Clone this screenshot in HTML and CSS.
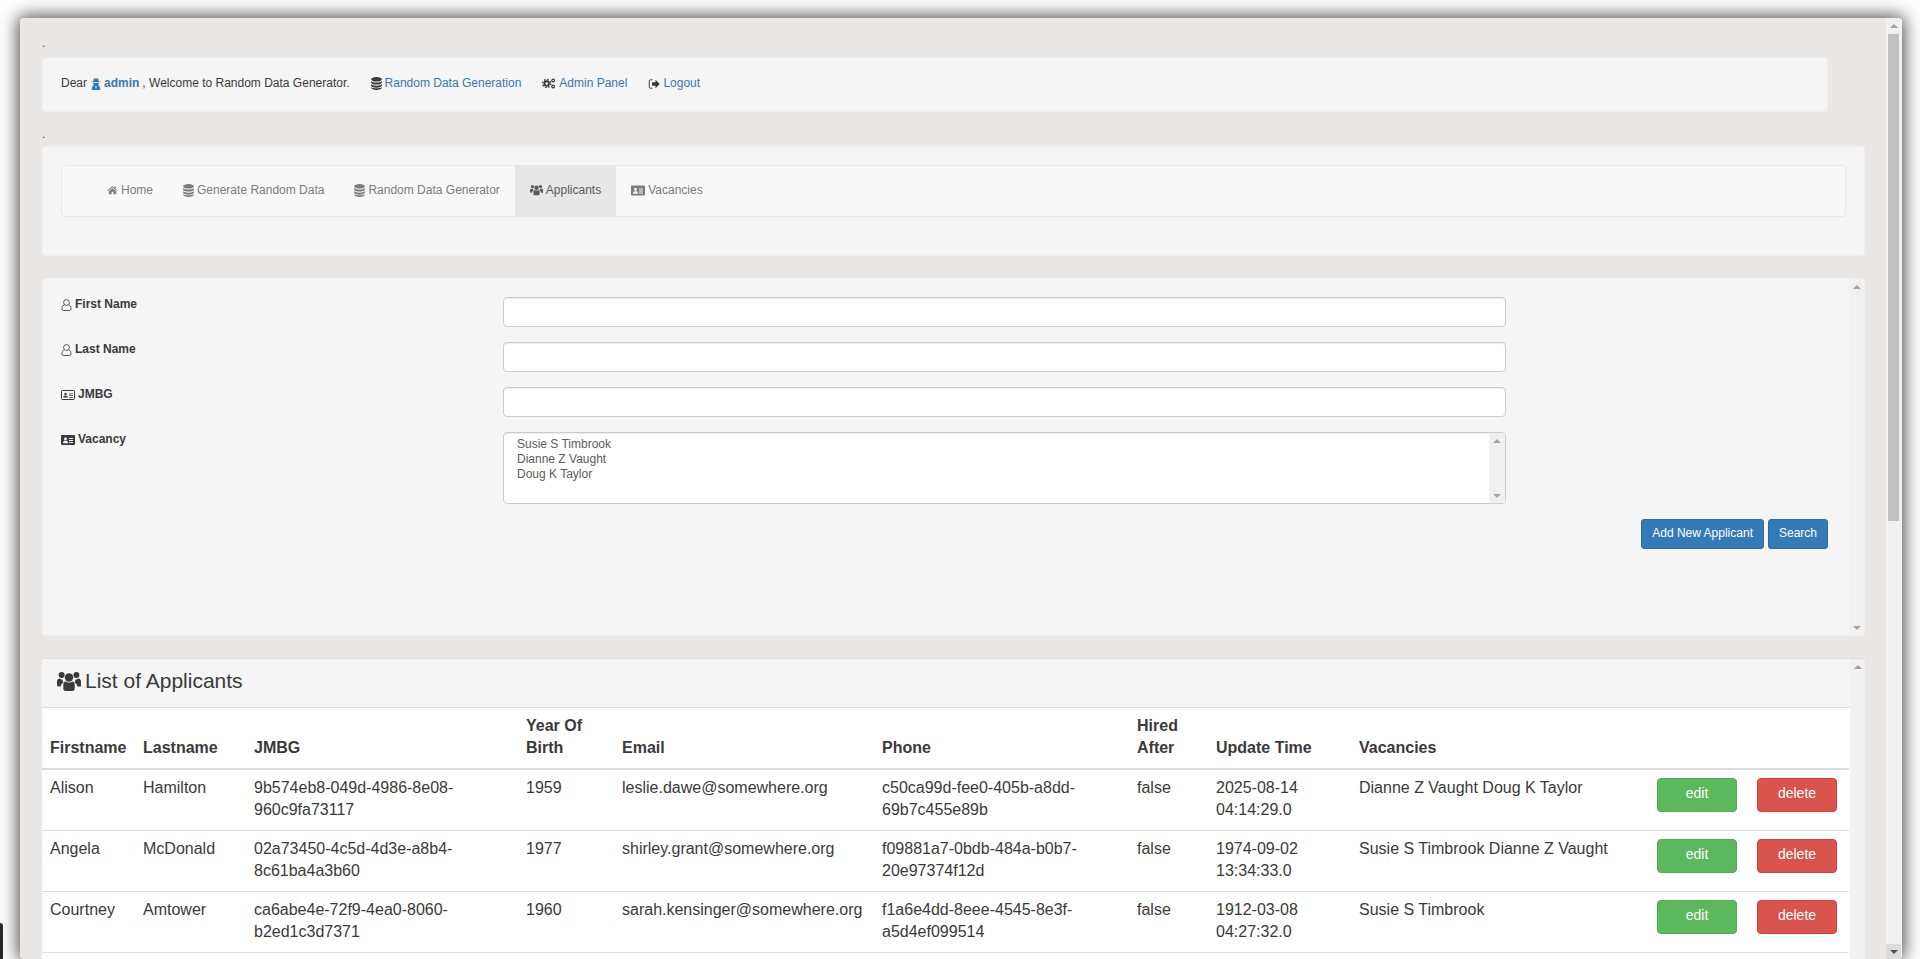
FILE: index.html
```html
<!DOCTYPE html>
<html lang="en">
<head>
<meta charset="utf-8">
<title>Applicants</title>
<link rel="stylesheet" href="styles.css">
</head>
<body>
<svg class="defs" aria-hidden="true">
  <symbol id="i-users" viewBox="0 0 24 20"><circle cx="12" cy="6" r="4.2"/><circle cx="4.6" cy="3.6" r="3"/><circle cx="19.4" cy="3.6" r="3"/><path d="M6.3 13.5q0-3.6 2.6-3.6 1.2 1.2 3.1 1.2t3.1-1.2q2.6 0 2.6 3.6v3.7q0 2.3-2.3 2.3H8.600q-2.300 0-2.300-2.300z"/><path d="M0 10.500q0-3.500 2.600-3.500 1 1 2.300 1 .3 0 .6-.1-.1 1.700 1.100 3.100-2.800 1-3 4H1.500Q0 15 0 13.500z"/><path d="M24 10.500q0-3.500-2.600-3.500-1 1-2.300 1-.3 0-.6-.1.100 1.700-1.100 3.100 2.800 1 3 4h3.100q1.500 0 1.500-1.500z"/></symbol>
  <symbol id="i-db" viewBox="0 0 20 24"><ellipse cx="10" cy="4.300" rx="10" ry="4.100"/><path d="M0 7.300c1.700 2 5.500 2.900 10 2.900s8.300-.9 10-2.900V10c0 2.200-4.500 4-10 4S0 12.200 0 10z"/><path d="M0 13.300c1.700 2 5.500 2.900 10 2.900s8.300-.9 10-2.900V16c0 2.200-4.500 4-10 4S0 18.200 0 16z" transform="translate(0 -.2)"/><path d="M0 18.300c1.700 2 5.500 2.400 10 2.400s8.300-.4 10-2.400V20c0 2.200-4.500 4-10 4S0 22.200 0 20z"/></symbol>
  <symbol id="i-home" viewBox="0 0 24 20"><path d="M12 1.500L.8 10.800l1.300 1.500L12 4.200l9.900 8.100 1.300-1.500-4.200-3.500V2.500h-3v2.800z"/><path d="M4 12.600l8-6.500 8 6.500V19h-6v-5h-4v5H4z"/></symbol>
  <symbol id="i-cogs" viewBox="0 0 30 24"><g fill="none" stroke="currentColor"><circle cx="10" cy="12" r="5" stroke-width="4"/><circle cx="10" cy="12" r="8.800" stroke-width="3" stroke-dasharray="3.500 3.400"/><circle cx="24" cy="5.500" r="3" stroke-width="2.600"/><circle cx="24" cy="18.500" r="3" stroke-width="2.600"/></g></symbol>
  <symbol id="i-out" viewBox="0 0 24 24"><path d="M9 3.500H5.500a3 3 0 0 0-3 3v11a3 3 0 0 0 3 3H9" fill="none" stroke="currentColor" stroke-width="2"/><path d="M8 8.500h7V3.500l8.500 8.500-8.500 8.500v-5H8z"/></symbol>
  <symbol id="i-secret" viewBox="0 0 20 24"><path d="M6 .5l4 1 4-1 2 6.500h3v1.500H1V7h3z"/><path d="M4.500 10h11v2.500q0 2-1.500 3 4.500 .5 4.500 4.500v4h-17v-4q0-4 4.500-4.500-1.500-1-1.500-3z"/><path d="M8 17h4l-2 4z" fill="#f5f5f5"/></symbol>
  <symbol id="i-user-o" viewBox="0 0 20 24"><g fill="none" stroke="currentColor" stroke-width="1.700"><circle cx="10" cy="7" r="5.800"/><path d="M5.300 11.800C2.500 12.800 1 15.500 1 19.500q0 3.500 3 3.500h12q3 0 3-3.500c0-4-1.500-6.700-4.300-7.700"/></g></symbol>
  <symbol id="i-card-o" viewBox="0 0 28 20"><rect x="1" y="1" width="26" height="18" rx="1.500" fill="none" stroke="currentColor" stroke-width="2"/><circle cx="9" cy="8" r="2.500"/><path d="M4.500 15q0-3.500 2-3.500h5q2 0 2 3.500z"/><path d="M16 7h8v1.500h-8zM16 10.500h8V12h-8zM16 14h8v1.500h-8z"/></symbol>
  <symbol id="i-card" viewBox="0 0 28 20"><path fill-rule="evenodd" d="M2 0h24q2 0 2 2v16q0 2-2 2H2q-2 0-2-2V2q0-2 2-2zM9 4.500a3 3 0 1 0 0 6 3 3 0 0 0 0-6zM4 16.500h10q0-5-2.500-5h-5Q4 11.500 4 16.500zM16 6v2h8V6zM16 10v2h8v-2zM16 14v2h8v-2z"/></symbol>
</svg>

<div class="tag"></div>

<div class="window">
  <main class="content">
    <p class="dot dot-first">.</p>
    <section class="well well-user">
      <span>Dear</span>
      <svg class="ic ic-secret link"><use href="#i-secret"/></svg>
      <a class="admin" href="#">admin</a>
      <span>, Welcome to Random Data Generator.</span>
      <span class="tool"><svg class="ic ic-db"><use href="#i-db"/></svg><a href="#">Random Data Generation</a></span>
      <span class="tool"><svg class="ic ic-cogs"><use href="#i-cogs"/></svg><a href="#">Admin Panel</a></span>
      <span class="tool"><svg class="ic ic-out"><use href="#i-out"/></svg><a href="#">Logout</a></span>
    </section>

    <p class="dot dot-second">.</p>
    <section class="well well-nav">
      <nav class="navbar">
        <a class="nav-link" href="#"><svg class="ic ic-home"><use href="#i-home"/></svg>Home</a>
        <a class="nav-link" href="#"><svg class="ic ic-db"><use href="#i-db"/></svg>Generate Random Data</a>
        <a class="nav-link" href="#"><svg class="ic ic-db"><use href="#i-db"/></svg>Random Data Generator</a>
        <a class="nav-link active" href="#"><svg class="ic ic-users"><use href="#i-users"/></svg>Applicants</a>
        <a class="nav-link" href="#"><svg class="ic ic-card"><use href="#i-card"/></svg>Vacancies</a>
      </nav>
    </section>

    <section class="well well-form">
      <form class="form">
        <div class="row">
          <label class="field-label"><svg class="ic ic-user"><use href="#i-user-o"/></svg>First Name</label>
          <input class="input" type="text">
        </div>
        <div class="row">
          <label class="field-label"><svg class="ic ic-user"><use href="#i-user-o"/></svg>Last Name</label>
          <input class="input" type="text">
        </div>
        <div class="row">
          <label class="field-label"><svg class="ic ic-card wide"><use href="#i-card-o"/></svg>JMBG</label>
          <input class="input" type="text">
        </div>
        <div class="row">
          <label class="field-label"><svg class="ic ic-card wide"><use href="#i-card"/></svg>Vacancy</label>
          <div class="listbox">
            <ul class="options">
              <li>Susie S Timbrook</li>
              <li>Dianne Z Vaught</li>
              <li>Doug K Taylor</li>
            </ul>
            <div class="vbar vbar-list"><i class="up"></i><i class="down"></i></div>
          </div>
        </div>
        <div class="actions">
          <button class="btn-sm" type="button">Add New Applicant</button>
          <button class="btn-sm" type="button">Search</button>
        </div>
      </form>
      <div class="vbar vbar-panel"><i class="up"></i><i class="down"></i></div>
    </section>

    <section class="well well-list">
      <div class="list-main">
        <h2 class="list-title"><svg class="ic ic-title"><use href="#i-users"/></svg>List of Applicants</h2>
        <table class="table">
          <colgroup>
            <col class="c1"><col class="c2"><col class="c3"><col class="c4"><col class="c5"><col class="c6"><col class="c7"><col class="c8"><col class="c9"><col class="c10"><col class="c10">
          </colgroup>
          <thead>
            <tr><th>Firstname</th><th>Lastname</th><th>JMBG</th><th>Year Of Birth</th><th>Email</th><th>Phone</th><th>Hired After</th><th>Update Time</th><th>Vacancies</th><th></th><th></th></tr>
          </thead>
          <tbody>
            <tr><td>Alison</td><td>Hamilton</td><td>9b574eb8-049d-4986-8e08-960c9fa73117</td><td>1959</td><td>leslie.dawe@somewhere.org</td><td>c50ca99d-fee0-405b-a8dd-69b7c455e89b</td><td>false</td><td>2025-08-14 04:14:29.0</td><td>Dianne Z Vaught Doug K Taylor</td><td><button class="btn edit" type="button">edit</button></td><td><button class="btn del" type="button">delete</button></td></tr>
            <tr><td>Angela</td><td>McDonald</td><td>02a73450-4c5d-4d3e-a8b4-8c61ba4a3b60</td><td>1977</td><td>shirley.grant@somewhere.org</td><td>f09881a7-0bdb-484a-b0b7-20e97374f12d</td><td>false</td><td>1974-09-02 13:34:33.0</td><td>Susie S Timbrook Dianne Z Vaught</td><td><button class="btn edit" type="button">edit</button></td><td><button class="btn del" type="button">delete</button></td></tr>
            <tr><td>Courtney</td><td>Amtower</td><td>ca6abe4e-72f9-4ea0-8060-b2ed1c3d7371</td><td>1960</td><td>sarah.kensinger@somewhere.org</td><td>f1a6e4dd-8eee-4545-8e3f-a5d4ef099514</td><td>false</td><td>1912-03-08 04:27:32.0</td><td>Susie S Timbrook</td><td><button class="btn edit" type="button">edit</button></td><td><button class="btn del" type="button">delete</button></td></tr>
          </tbody>
        </table>
      </div>
      <div class="vbar vbar-panel"><i class="up"></i></div>
    </section>
  </main>
  <aside class="vbar vbar-window">
    <div class="btn-up"><i class="up"></i></div>
    <div class="thumb"></div>
    <div class="btn-down"><i class="down"></i></div>
  </aside>
</div>
</body>
</html>
```

FILE: styles.css
```css
* { box-sizing: border-box; }
html, body { margin: 0; height: 959px; overflow: hidden; }
body {
  padding: 18px 18px 0 20px;
  background: #fff;
  color: #3a3a3a;
  font: 12px/17px "Liberation Sans", Arial, sans-serif;
}
.defs { display: none; }
a { color: #337ab7; text-decoration: none; }

.tag {
  position: absolute;
  left: 0;
  top: 923px;
  width: 3px;
  height: 36px;
  background: #23282b;
  border-radius: 0 4px 0 0;
}

.window {
  display: flex;
  height: 941px;
  background: #e9e8e6;
  border-radius: 4px;
  overflow: hidden;
  box-shadow: 0 0 18px 2px rgba(0,0,0,.72);
}
.content {
  flex: 1;
  min-width: 0;
  display: flex;
  flex-direction: column;
  padding: 17px 21px 0 22px;
}
.dot { margin: 0; height: 17px; font-size: 12px; line-height: 17px; }
.dot-first { margin-bottom: 5px; }
.dot-second { margin: 14px 0 3px; }

.well {
  background: #f5f5f5;
  border: 1px solid #f0f0f0;
  border-radius: 4px;
}
.well-user {
  margin-right: 37px;
  height: 55px;
  padding: 0 18px 2px;
  display: flex;
  align-items: center;
}
.well-user > span:first-child { margin-right: 4px; }
.admin { font-weight: 700; margin: 0 3px 0 3px; }
.tool { display: inline-flex; align-items: center; margin-left: 21px; }
.ic { flex: none; fill: currentColor; color: inherit; }
.link { color: #337ab7; }
.ic-secret { width: 10px; height: 12px; }
.ic-db { width: 11px; height: 13px; margin-right: 3px; }
.ic-cogs { width: 14px; height: 11px; margin-right: 3px; }
.ic-out { width: 12px; height: 12px; margin-right: 3px; }
.ic-home { width: 11px; height: 10px; margin-right: 3px; }
.ic-users { width: 13px; height: 12px; margin-right: 3px; }
.ic-card { width: 14px; height: 11px; margin-right: 3px; }
.ic-user { width: 11px; height: 12px; margin-right: 3px; }
.ic-card.wide { width: 14px; height: 10px; margin-right: 3px; }
.ic-title { width: 24px; height: 21px; margin-right: 4px; }

.well-nav {
  margin-bottom: 22px;
  padding: 18px 18px;
  height: 110px;
}
.navbar {
  display: flex;
  height: 52px;
  padding-left: 30px;
  background: #f8f8f8;
  border: 1px solid #e7e7e7;
  border-radius: 4px;
}
.nav-link {
  display: flex;
  align-items: center;
  padding: 0 15px 2px;
  color: #7c7c7c;
}
.nav-link.active { background: #e7e7e7; color: #5a5a5a; }

.well-form {
  display: flex;
  height: 358px;
  margin-bottom: 22px;
  padding: 0;
}
.form { flex: 1; padding: 15px 0 0 18px; }
.row { display: flex; width: 1445px; margin-bottom: 12px; }
.field-label {
  width: 442px;
  display: flex;
  align-items: center;
  height: 17px;
  margin-top: 2px;
  font-weight: 700;
}
.input, .listbox {
  margin-top: 3px;
  width: 1003px;
  background: #fff;
  border: 1px solid #ccc;
  border-radius: 4px;
  box-shadow: inset 0 1px 1px rgba(0,0,0,.075);
}
.input { height: 30px; padding: 5px 10px; font: inherit; }
.listbox { height: 72px; display: flex; overflow: hidden; }
.options { flex: 1; list-style: none; margin: 4px 0 0; padding: 0 0 0 13px; color: #5c5c5c; line-height: 15px; }
.vbar { flex: none; display: flex; flex-direction: column; justify-content: space-between; background: #f1f1f1; }
.vbar-list { width: 16px; padding: 6px 0 5px; background: #f0f0f0; }
.vbar-panel { width: 15px; padding: 6px 0 5px; }
.up, .down { display: block; width: 0; height: 0; margin: 0 auto; border-left: 4px solid transparent; border-right: 4px solid transparent; }
.up { border-bottom: 4px solid #a3a3a3; }
.down { border-top: 4px solid #a3a3a3; }
.actions { width: 1767px; margin-top: 15px; display: flex; justify-content: flex-end; gap: 4px; }
.btn-sm {
  height: 30px;
  padding: 0 10px 2px;
  font: 12px/17px "Liberation Sans", Arial, sans-serif;
  color: #fff;
  background: #337ab7;
  border: 1px solid #2e6da4;
  border-radius: 3px;
}

.well-list {
  flex: 1;
  min-height: 0;
  display: flex;
  overflow: hidden;
  border: 0;
  border-top: 1px solid #ddd;
  border-radius: 4px 4px 0 0;
}
.list-main { flex: 1; background: #fff; }
.list-title {
  display: flex;
  align-items: center;
  height: 49px;
  margin: 0;
  padding: 0 15px 4px;
  background: #f5f5f5;
  border-bottom: 1px solid #ddd;
  font-size: 21px;
  font-weight: 400;
  line-height: 22px;
}
.table {
  table-layout: fixed;
  border-collapse: collapse;
  width: 1807px;
  font-size: 16px;
  line-height: 22px;
}
.c1 { width: 93px; } .c2 { width: 111px; } .c3 { width: 272px; } .c4 { width: 96px; }
.c5 { width: 260px; } .c6 { width: 255px; } .c7 { width: 79px; } .c8 { width: 143px; }
.c9 { width: 298px; } .c10 { width: 100px; }
th, td { padding: 7px 8px 9px; text-align: left; vertical-align: top; }
th { vertical-align: bottom; border-bottom: 2px solid #ddd; }
td { border-bottom: 1px solid #ddd; }
.btn {
  display: block;
  width: 80px;
  height: 34px;
  margin-top: 1px;
  padding: 0 0 4px;
  font: 14px/20px "Liberation Sans", Arial, sans-serif;
  color: #fff;
  border: 1px solid;
  border-radius: 4px;
}
.edit { background: #5cb85c; border-color: #4cae4c; }
.del { background: #d9534f; border-color: #d43f3a; }

.vbar-window { width: 16px; position: relative; justify-content: flex-start; border-right: 1px solid #f5f5f5; }
.btn-up { height: 16px; padding-top: 6px; }
.thumb { width: 11px; height: 487px; margin-left: 2px; background: #c1c1c1; }
.btn-down {
  margin-top: auto;
  height: 15px;
  padding-top: 6px;
  background: #dcdcdc;
}
.btn-down .down { border-top-color: #505050; }
```
